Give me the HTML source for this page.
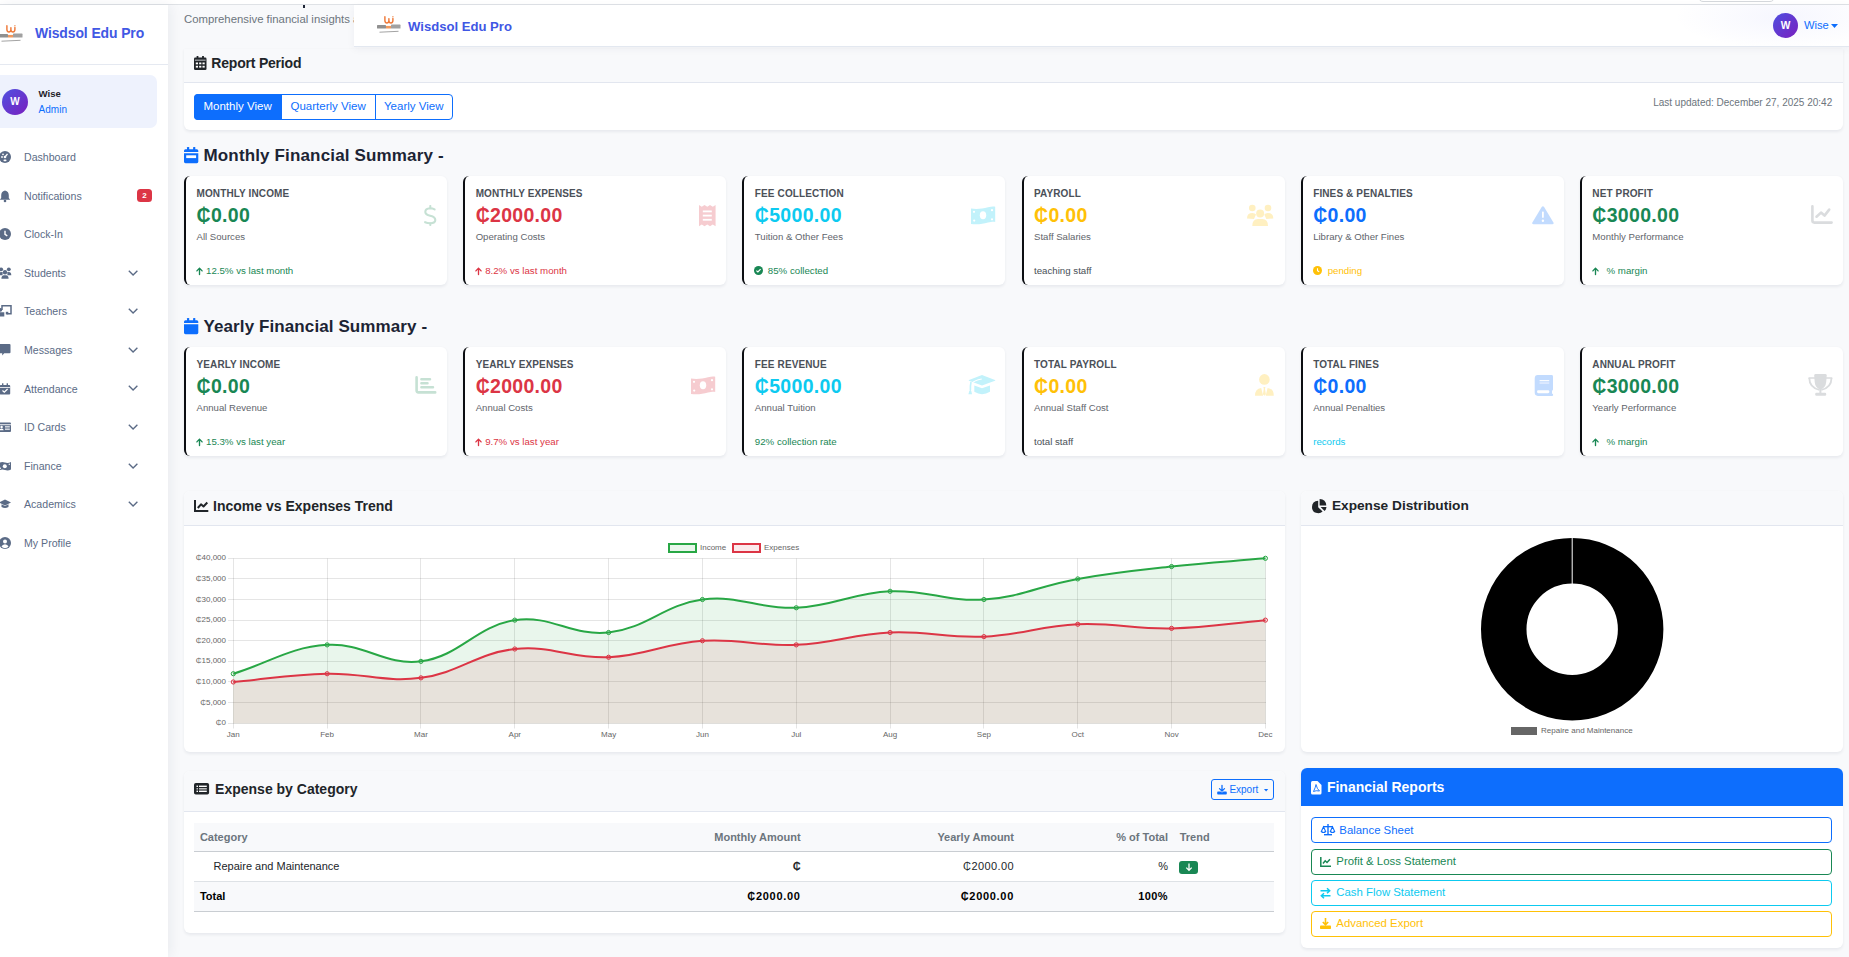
<!DOCTYPE html>
<html><head><meta charset="utf-8"><style>
html,body{margin:0;padding:0;width:1849px;height:957px;overflow:hidden;background:#fff;font-family:"Liberation Sans",sans-serif;}
.t{position:absolute;white-space:nowrap;}
svg{overflow:visible;}
</style></head><body>
<div style="position:absolute;left:0.00px;top:0.00px;width:1849.00px;height:4.00px;background:#fff;"></div>
<div style="position:absolute;left:1698.00px;top:-10.00px;width:77.00px;height:11.50px;background:#fff;border:1px solid #d5d8dc;border-radius:5px;box-sizing:border-box;"></div>
<div style="position:absolute;left:0.00px;top:4.00px;width:1849.00px;height:1.00px;background:#dfe2e6;"></div>
<div style="position:absolute;left:168.00px;top:5.00px;width:1681.00px;height:952.00px;background:#f8f9fb;"></div>
<div style="position:absolute;left:0.00px;top:5.00px;width:168.00px;height:952.00px;background:#fff;box-shadow:2px 0 12px rgba(30,40,70,0.07);z-index:2;"></div>
<svg style="position:absolute;left:-1.00px;top:24.10px;z-index:7;" width="24.00" height="19.00" viewBox="0 0 24 19"><path d="M7.9 1.8 L7.9 5.6 Q7.9 8 9.9 8 Q11.9 8 11.9 5.6 L11.9 3.6 M11.9 5.6 Q11.9 8 13.9 8 Q15.9 8 15.9 5.6 L15.9 3.4" fill="none" stroke="#ef7a3a" stroke-width="1.45" stroke-linecap="round"/><circle cx="15.9" cy="1.7" r="0.8" fill="#f19a66"/><rect x="0" y="10.1" width="9" height="3.4" rx="0.6" fill="#7c7c7c" opacity="0.85"/><rect x="9" y="10.9" width="5" height="2.6" fill="#f0995f"/><rect x="14" y="9.6" width="9.5" height="3.9" rx="0.6" fill="#8a8a8a" opacity="0.8"/><path d="M2.5 17.2 L21.5 16.3" stroke="#999" stroke-width="0.9"/></svg>
<div class="t" style="left:35.00px;top:27.19px;font-size:13.95px;line-height:13.95px;font-weight:bold;color:#4158e4;letter-spacing:-0.1px;z-index:3;">Wisdsol Edu Pro</div>
<div style="position:absolute;left:0.00px;top:64.00px;width:168.00px;height:1.00px;background:#e5e9f1;z-index:3;"></div>
<div style="position:absolute;left:-8.00px;top:75.00px;width:165.00px;height:53.00px;background:#eef2fd;border-radius:7px;z-index:3;"></div>
<div style="position:absolute;left:2.00px;top:89.00px;width:26.00px;height:26.00px;background:linear-gradient(135deg,#4f52e0,#7a1fbf);border-radius:50%;z-index:3;"></div>
<div class="t" style="left:15.00px;top:97.03px;font-size:10px;line-height:10px;font-weight:bold;color:#fff;width:0;display:flex;justify-content:center;z-index:4;">W</div>
<div class="t" style="left:38.60px;top:89.07px;font-size:9.6px;line-height:9.6px;font-weight:bold;color:#1f2229;z-index:3;">Wise</div>
<div class="t" style="left:38.60px;top:104.53px;font-size:10px;line-height:10px;color:#0d6efd;z-index:3;">Admin</div>
<svg style="position:absolute;left:-1.00px;top:151.00px;z-index:3;" width="12.00" height="12.00" viewBox="0 0 12 12"><circle cx="6" cy="6" r="6" fill="#5b6b86"/><circle cx="6" cy="6" r="1.3" fill="#fff"/><path d="M6 6 L8.5 2.8" stroke="#fff" stroke-width="1.3"/><circle cx="3" cy="6" r="0.9" fill="#fff"/><circle cx="4" cy="3.3" r="0.9" fill="#fff"/><circle cx="6.5" cy="2.2" r="0.0" fill="#fff"/><rect x="4.5" y="8.6" width="3" height="1.6" rx="0.8" fill="#fff"/></svg>
<div class="t" style="left:24.00px;top:151.93px;font-size:10.6px;line-height:10.6px;color:#5b6b86;z-index:3;">Dashboard</div>
<svg style="position:absolute;left:-1.00px;top:189.60px;z-index:3;" width="12.00" height="12.00" viewBox="0 0 12 12"><path d="M6 0.5 C3.2 1 2.2 3.2 2.2 5.5 L2.2 8 L0.8 9.8 L11.2 9.8 L9.8 8 L9.8 5.5 C9.8 3.2 8.8 1 6 0.5Z" fill="#5b6b86"/><circle cx="6" cy="11" r="1.3" fill="#5b6b86"/></svg>
<div class="t" style="left:24.00px;top:190.53px;font-size:10.6px;line-height:10.6px;color:#5b6b86;z-index:3;">Notifications</div>
<div style="position:absolute;left:137.00px;top:189.10px;width:15.00px;height:13.00px;background:#dc3545;border-radius:3.5px;z-index:3;"></div>
<div class="t" style="left:144.50px;top:191.83px;font-size:8px;line-height:8px;color:#fff;font-weight:bold;width:0;display:flex;justify-content:center;z-index:4;">2</div>
<svg style="position:absolute;left:-1.00px;top:228.20px;z-index:3;" width="12.00" height="12.00" viewBox="0 0 12 12"><circle cx="6" cy="6" r="6" fill="#5b6b86"/><path d="M6 2.8 L6 6.3 L8.3 7.8" stroke="#fff" stroke-width="1.4" fill="none"/></svg>
<div class="t" style="left:24.00px;top:229.13px;font-size:10.6px;line-height:10.6px;color:#5b6b86;z-index:3;">Clock-In</div>
<svg style="position:absolute;left:-1.00px;top:266.80px;z-index:3;" width="12.00" height="12.00" viewBox="0 0 12 12"><circle cx="2.2" cy="2.3" r="1.9" fill="#5b6b86"/><circle cx="9.8" cy="2.3" r="1.9" fill="#5b6b86"/><circle cx="6" cy="5.2" r="2.2" fill="#5b6b86"/><path d="M-0.3 8.3 Q-0.3 5 2.3 5 Q3.5 5 4 5.6 Q3.4 6.6 3.6 8.3Z M12.3 8.3 Q12.3 5 9.7 5 Q8.5 5 8 5.6 Q8.6 6.6 8.4 8.3Z" fill="#5b6b86"/><path d="M2.4 11.8 Q2.4 8.2 5 8.2 L7 8.2 Q9.6 8.2 9.6 11.8Z" fill="#5b6b86"/></svg>
<div class="t" style="left:24.00px;top:267.73px;font-size:10.6px;line-height:10.6px;color:#5b6b86;z-index:3;">Students</div>
<svg style="position:absolute;left:127.80px;top:269.60px;z-index:3;" width="10.20" height="6.50" viewBox="0 0 10.2 6.5"><path d="M0.8 0.8 L5.1 5.1 L9.4 0.8" fill="none" stroke="#5b6b86" stroke-width="1.35"/></svg>
<svg style="position:absolute;left:-1.00px;top:305.40px;z-index:3;" width="12.00" height="12.00" viewBox="0 0 12 12"><path d="M3 5 L3 0.8 L12 0.8 L12 8.7 L7.5 8.7" fill="none" stroke="#5b6b86" stroke-width="1.5"/><rect x="6.8" y="6.8" width="2.5" height="2.5" fill="#5b6b86"/><circle cx="1.3" cy="4.8" r="1.9" fill="#5b6b86"/><path d="M-1.5 11.5 Q-1.5 7.2 1.5 7.2 L5.3 7.2 L5.3 11.5Z" fill="#5b6b86"/></svg>
<div class="t" style="left:24.00px;top:306.33px;font-size:10.6px;line-height:10.6px;color:#5b6b86;z-index:3;">Teachers</div>
<svg style="position:absolute;left:127.80px;top:308.20px;z-index:3;" width="10.20" height="6.50" viewBox="0 0 10.2 6.5"><path d="M0.8 0.8 L5.1 5.1 L9.4 0.8" fill="none" stroke="#5b6b86" stroke-width="1.35"/></svg>
<svg style="position:absolute;left:-1.00px;top:344.00px;z-index:3;" width="12.00" height="12.00" viewBox="0 0 12 12"><path d="M-0.5 0 L10.5 0 Q11.5 0 11.5 1 L11.5 8.3 Q11.5 9.3 10.5 9.3 L5.2 9.3 L3.2 11.5 L3.2 9.3 L-0.5 9.3Z" fill="#5b6b86"/></svg>
<div class="t" style="left:24.00px;top:344.93px;font-size:10.6px;line-height:10.6px;color:#5b6b86;z-index:3;">Messages</div>
<svg style="position:absolute;left:127.80px;top:346.80px;z-index:3;" width="10.20" height="6.50" viewBox="0 0 10.2 6.5"><path d="M0.8 0.8 L5.1 5.1 L9.4 0.8" fill="none" stroke="#5b6b86" stroke-width="1.35"/></svg>
<svg style="position:absolute;left:-1.00px;top:382.60px;z-index:3;" width="12.00" height="12.00" viewBox="0 0 12 12"><rect x="0.8" y="2" width="10.4" height="9.5" rx="1" fill="#5b6b86"/><rect x="3" y="0.3" width="1.4" height="2.5" fill="#5b6b86"/><rect x="7.6" y="0.3" width="1.4" height="2.5" fill="#5b6b86"/><rect x="0.8" y="4" width="10.4" height="0.8" fill="#fff"/><path d="M3.5 7.5 L5.3 9.2 L8.6 6" stroke="#fff" stroke-width="1.2" fill="none"/></svg>
<div class="t" style="left:24.00px;top:383.53px;font-size:10.6px;line-height:10.6px;color:#5b6b86;z-index:3;">Attendance</div>
<svg style="position:absolute;left:127.80px;top:385.40px;z-index:3;" width="10.20" height="6.50" viewBox="0 0 10.2 6.5"><path d="M0.8 0.8 L5.1 5.1 L9.4 0.8" fill="none" stroke="#5b6b86" stroke-width="1.35"/></svg>
<svg style="position:absolute;left:-1.00px;top:421.20px;z-index:3;" width="12.00" height="12.00" viewBox="0 0 12 12"><rect x="-0.5" y="1.5" width="12.5" height="9.5" rx="1" fill="#5b6b86"/><rect x="-0.5" y="3.3" width="12.5" height="0.9" fill="#fff"/><circle cx="2.6" cy="6" r="1.2" fill="#fff"/><path d="M0.6 9.3 Q0.6 7.5 2.6 7.5 Q4.6 7.5 4.6 9.3Z" fill="#fff"/><rect x="6" y="5.3" width="4.8" height="1.1" fill="#fff"/><rect x="6" y="7.6" width="4.8" height="1.1" fill="#fff"/></svg>
<div class="t" style="left:24.00px;top:422.13px;font-size:10.6px;line-height:10.6px;color:#5b6b86;z-index:3;">ID Cards</div>
<svg style="position:absolute;left:127.80px;top:424.00px;z-index:3;" width="10.20" height="6.50" viewBox="0 0 10.2 6.5"><path d="M0.8 0.8 L5.1 5.1 L9.4 0.8" fill="none" stroke="#5b6b86" stroke-width="1.35"/></svg>
<svg style="position:absolute;left:-1.00px;top:459.80px;z-index:3;" width="12.00" height="12.00" viewBox="0 0 12 12"><path d="M-0.5 3 Q2.5 1.5 6 2.5 Q9 3.5 12 2 L12 9.5 Q9 11 6 10 Q2.5 9 -0.5 10.5Z" fill="#5b6b86"/><circle cx="5.8" cy="6.2" r="2" fill="#fff"/><circle cx="1.3" cy="8.2" r="0.7" fill="#fff"/><circle cx="10.3" cy="4.3" r="0.7" fill="#fff"/></svg>
<div class="t" style="left:24.00px;top:460.73px;font-size:10.6px;line-height:10.6px;color:#5b6b86;z-index:3;">Finance</div>
<svg style="position:absolute;left:127.80px;top:462.60px;z-index:3;" width="10.20" height="6.50" viewBox="0 0 10.2 6.5"><path d="M0.8 0.8 L5.1 5.1 L9.4 0.8" fill="none" stroke="#5b6b86" stroke-width="1.35"/></svg>
<svg style="position:absolute;left:-1.00px;top:498.40px;z-index:3;" width="12.00" height="12.00" viewBox="0 0 12 12"><path d="M6 1.5 L12 4.5 L6 7.5 L0 4.5Z" fill="#5b6b86"/><path d="M2.5 6.2 L2.5 9 Q6 11 9.5 9 L9.5 6.2 L6 8Z" fill="#5b6b86"/></svg>
<div class="t" style="left:24.00px;top:499.33px;font-size:10.6px;line-height:10.6px;color:#5b6b86;z-index:3;">Academics</div>
<svg style="position:absolute;left:127.80px;top:501.20px;z-index:3;" width="10.20" height="6.50" viewBox="0 0 10.2 6.5"><path d="M0.8 0.8 L5.1 5.1 L9.4 0.8" fill="none" stroke="#5b6b86" stroke-width="1.35"/></svg>
<svg style="position:absolute;left:-1.00px;top:537.00px;z-index:3;" width="12.00" height="12.00" viewBox="0 0 12 12"><circle cx="6" cy="6" r="6" fill="#5b6b86"/><circle cx="6" cy="4.5" r="2" fill="#fff"/><path d="M2.5 9.8 Q3.2 7.2 6 7.2 Q8.8 7.2 9.5 9.8 Q6 12.5 2.5 9.8Z" fill="#fff"/></svg>
<div class="t" style="left:24.00px;top:537.93px;font-size:10.6px;line-height:10.6px;color:#5b6b86;z-index:3;">My Profile</div>
<div class="t" style="left:184.00px;top:13.79px;font-size:11.35px;line-height:11.35px;color:#6c757d;">Comprehensive financial insights and analytics</div>
<div style="position:absolute;left:303.00px;top:5.00px;width:2.40px;height:2.80px;background:#1e2535;"></div>
<div style="position:absolute;left:184.00px;top:49.00px;width:1659.00px;height:81.00px;background:#fff;border-radius:0 0 6px 6px;box-shadow:0 1.5px 3px rgba(30,40,70,0.07);"></div>
<div style="position:absolute;left:184.00px;top:49.00px;width:1659.00px;height:34.00px;background:#f8f9fb;border-bottom:1px solid #e2e6ef;box-sizing:border-box;"></div>
<svg style="position:absolute;left:194.00px;top:56.00px;" width="12.50" height="14.00" viewBox="0 0 12.5 14"><rect x="2.6" y="0" width="1.8" height="2.5" fill="#212529"/><rect x="8.1" y="0" width="1.8" height="2.5" fill="#212529"/><rect x="0" y="1.6" width="12.5" height="12.4" rx="1.3" fill="#212529"/><rect x="0.9" y="3.5" width="10.7" height="1.5" fill="#8a8d91"/><rect x="1.8" y="6.5" width="2.2" height="1.8" fill="#fff"/><rect x="5.15" y="6.5" width="2.2" height="1.8" fill="#fff"/><rect x="8.5" y="6.5" width="2.2" height="1.8" fill="#fff"/><rect x="1.8" y="9.8" width="2.2" height="1.8" fill="#fff"/><rect x="5.15" y="9.8" width="2.2" height="1.8" fill="#fff"/><rect x="8.5" y="9.8" width="2.2" height="1.8" fill="#fff"/></svg>
<div class="t" style="left:211.30px;top:55.85px;font-size:14px;line-height:14px;font-weight:bold;color:#212529;letter-spacing:-0.2px;">Report Period</div>
<div style="position:absolute;left:194.00px;top:94.00px;width:259.00px;height:26.00px;border:1px solid #0d6efd;border-radius:4px;box-sizing:border-box;background:#fff;"></div>
<div style="position:absolute;left:194.00px;top:94.00px;width:88.00px;height:26.00px;background:#0d6efd;border-radius:4px 0 0 4px;"></div>
<div style="position:absolute;left:374.50px;top:94.00px;width:1.00px;height:26.00px;background:#0d6efd;"></div>
<div class="t" style="left:203.50px;top:101.17px;font-size:11.5px;line-height:11.5px;color:#fff;">Monthly View</div>
<div class="t" style="left:290.50px;top:101.17px;font-size:11.5px;line-height:11.5px;color:#0d6efd;">Quarterly View</div>
<div class="t" style="left:384.00px;top:101.17px;font-size:11.5px;line-height:11.5px;color:#0d6efd;">Yearly View</div>
<div class="t" style="right:16.80px;text-align:right;top:98.23px;font-size:10px;line-height:10px;color:#6c757d;">Last updated: December 27, 2025 20:42</div>
<div style="position:absolute;left:354.00px;top:5.00px;width:1495.00px;height:42.00px;background:radial-gradient(ellipse 110px 32px at 1430px 12px, rgba(99,110,241,0.06), rgba(99,110,241,0) 100%),#fff;border-bottom:1px solid #e3e8f0;box-shadow:0 2px 8px rgba(30,40,70,0.05);z-index:5;box-sizing:border-box;"></div>
<svg style="position:absolute;left:377.00px;top:15.30px;z-index:7;" width="24.00" height="19.00" viewBox="0 0 24 19"><path d="M7.9 1.8 L7.9 5.6 Q7.9 8 9.9 8 Q11.9 8 11.9 5.6 L11.9 3.6 M11.9 5.6 Q11.9 8 13.9 8 Q15.9 8 15.9 5.6 L15.9 3.4" fill="none" stroke="#ef7a3a" stroke-width="1.45" stroke-linecap="round"/><circle cx="15.9" cy="1.7" r="0.8" fill="#f19a66"/><rect x="0" y="10.1" width="9" height="3.4" rx="0.6" fill="#7c7c7c" opacity="0.85"/><rect x="9" y="10.9" width="5" height="2.6" fill="#f0995f"/><rect x="14" y="9.6" width="9.5" height="3.9" rx="0.6" fill="#8a8a8a" opacity="0.8"/><path d="M2.5 17.2 L21.5 16.3" stroke="#999" stroke-width="0.9"/></svg>
<style>svg{z-index:1}</style>
<div class="t" style="left:408.00px;top:20.41px;font-size:13.1px;line-height:13.1px;font-weight:bold;color:#3f57e4;z-index:6;">Wisdsol Edu Pro</div>
<div style="position:absolute;left:1773.00px;top:13.00px;width:25.00px;height:25.00px;background:linear-gradient(135deg,#4e4fe0,#7a1fbf);border-radius:50%;z-index:6;"></div>
<div class="t" style="left:1785.50px;top:20.67px;font-size:10.2px;line-height:10.2px;font-weight:bold;color:#fff;width:0;display:flex;justify-content:center;z-index:7;">W</div>
<div class="t" style="left:1803.90px;top:20.02px;font-size:11.2px;line-height:11.2px;color:#0d6efd;z-index:6;">Wise</div>
<svg style="position:absolute;left:1831.00px;top:23.50px;z-index:6;" width="7.00" height="4.00" viewBox="0 0 7 4"><path d="M0 0 L7 0 L3.5 4Z" fill="#0d6efd"/></svg>
<svg style="position:absolute;left:183.80px;top:146.80px;" width="14.30" height="16.30" viewBox="0 0 14.3 16.3"><rect x="3" y="0" width="2.2" height="3" rx="0.6" fill="#0d6efd"/><rect x="9.1" y="0" width="2.2" height="3" rx="0.6" fill="#0d6efd"/><path d="M1.5 2.3 L12.8 2.3 Q14.3 2.3 14.3 3.8 L14.3 5.1 L0 5.1 L0 3.8 Q0 2.3 1.5 2.3Z" fill="#0d6efd"/><path d="M0 6.2 L14.3 6.2 L14.3 14.8 Q14.3 16.3 12.8 16.3 L1.5 16.3 Q0 16.3 0 14.8Z" fill="#0d6efd"/><rect x="2.2" y="8.3" width="9.9" height="2.8" fill="#fff"/></svg>
<div class="t" style="left:203.50px;top:146.81px;font-size:17px;line-height:17px;font-weight:bold;color:#1c2434;letter-spacing:0.15px;">Monthly Financial Summary -</div>
<svg style="position:absolute;left:183.80px;top:317.80px;" width="14.30" height="16.30" viewBox="0 0 14.3 16.3"><rect x="3" y="0" width="2.2" height="3" rx="0.6" fill="#0d6efd"/><rect x="9.1" y="0" width="2.2" height="3" rx="0.6" fill="#0d6efd"/><path d="M1.5 2.3 L12.8 2.3 Q14.3 2.3 14.3 3.8 L14.3 5.1 L0 5.1 L0 3.8 Q0 2.3 1.5 2.3Z" fill="#0d6efd"/><path d="M0 6.2 L14.3 6.2 L14.3 14.8 Q14.3 16.3 12.8 16.3 L1.5 16.3 Q0 16.3 0 14.8Z" fill="#0d6efd"/></svg>
<div class="t" style="left:203.50px;top:318.21px;font-size:17px;line-height:17px;font-weight:bold;color:#1c2434;letter-spacing:0.1px;">Yearly Financial Summary -</div>
<div style="position:absolute;left:184.00px;top:176.00px;width:263.17px;height:109.00px;background:#fff;border-radius:6px;border-left:2px solid #0c0e12;box-sizing:border-box;box-shadow:0 1.5px 3px rgba(30,40,70,0.07);"></div>
<div class="t" style="left:196.50px;top:188.53px;font-size:10px;line-height:10px;font-weight:bold;color:#4b5058;letter-spacing:0.12px;">MONTHLY INCOME</div>
<div class="t" style="left:196.50px;top:205.79px;font-size:19.5px;line-height:19.5px;font-weight:bold;color:#198754;letter-spacing:0.3px;">₵0.00</div>
<div class="t" style="left:196.50px;top:231.87px;font-size:9.6px;line-height:9.6px;color:#5f656c;">All Sources</div>
<svg style="position:absolute;left:196.20px;top:266.60px;" width="7.00" height="8.20" viewBox="0 0 7 8.2"><path d="M3.5 7.6 L3.5 1.3 M0.9 3.9 L3.5 1.1 L6.1 3.9" fill="none" stroke="#198754" stroke-width="1.35" stroke-linecap="round" stroke-linejoin="round"/></svg>
<div class="t" style="left:206.00px;top:265.99px;font-size:9.7px;line-height:9.7px;color:#198754;">12.5% vs last month</div>
<svg style="position:absolute;left:423.80px;top:205.00px;" width="12.50" height="21.00" viewBox="0 0 12.5 21"><path d="M10.6 4.4 Q8.5 3.3 6.2 3.3 Q1.3 3.5 1.3 6.9 Q1.3 9.5 6.2 10.7 Q11.3 11.9 11.3 15 Q11.3 18.2 6.3 18.2 Q3.3 18.2 1.1 17.2" fill="none" stroke="#c6e1d4" stroke-width="2.1" stroke-linecap="round"/><rect x="5.3" y="0" width="2" height="3.6" rx="0.8" fill="#c6e1d4"/><rect x="5.3" y="17.6" width="2" height="3.5" rx="0.8" fill="#c6e1d4"/></svg>
<div style="position:absolute;left:463.17px;top:176.00px;width:263.17px;height:109.00px;background:#fff;border-radius:6px;border-left:2px solid #0c0e12;box-sizing:border-box;box-shadow:0 1.5px 3px rgba(30,40,70,0.07);"></div>
<div class="t" style="left:475.67px;top:188.53px;font-size:10px;line-height:10px;font-weight:bold;color:#4b5058;letter-spacing:0.12px;">MONTHLY EXPENSES</div>
<div class="t" style="left:475.67px;top:205.79px;font-size:19.5px;line-height:19.5px;font-weight:bold;color:#dc3545;letter-spacing:0.3px;">₵2000.00</div>
<div class="t" style="left:475.67px;top:231.87px;font-size:9.6px;line-height:9.6px;color:#5f656c;">Operating Costs</div>
<svg style="position:absolute;left:475.37px;top:266.60px;" width="7.00" height="8.20" viewBox="0 0 7 8.2"><path d="M3.5 7.6 L3.5 1.3 M0.9 3.9 L3.5 1.1 L6.1 3.9" fill="none" stroke="#dc3545" stroke-width="1.35" stroke-linecap="round" stroke-linejoin="round"/></svg>
<div class="t" style="left:485.17px;top:265.99px;font-size:9.7px;line-height:9.7px;color:#dc3545;">8.2% vs last month</div>
<svg style="position:absolute;left:698.80px;top:204.50px;" width="16.60" height="21.20" viewBox="0 0 16.6 21.2"><path d="M0 0 L2.8 1.8 L5.5 0 L8.3 1.8 L11 0 L13.8 1.8 L16.6 0 L16.6 21.2 L13.8 19.4 L11 21.2 L8.3 19.4 L5.5 21.2 L2.8 19.4 L0 21.2Z" fill="#f6ccd0"/><rect x="3.8" y="5.5" width="9" height="1.8" fill="#fff"/><rect x="3.8" y="9.7" width="9" height="1.8" fill="#fff"/><rect x="3.8" y="13.9" width="9" height="1.8" fill="#fff"/></svg>
<div style="position:absolute;left:742.33px;top:176.00px;width:263.17px;height:109.00px;background:#fff;border-radius:6px;border-left:2px solid #0c0e12;box-sizing:border-box;box-shadow:0 1.5px 3px rgba(30,40,70,0.07);"></div>
<div class="t" style="left:754.83px;top:188.53px;font-size:10px;line-height:10px;font-weight:bold;color:#4b5058;letter-spacing:0.12px;">FEE COLLECTION</div>
<div class="t" style="left:754.83px;top:205.79px;font-size:19.5px;line-height:19.5px;font-weight:bold;color:#0dcaf0;letter-spacing:0.3px;">₵5000.00</div>
<div class="t" style="left:754.83px;top:231.87px;font-size:9.6px;line-height:9.6px;color:#5f656c;">Tuition &amp; Other Fees</div>
<svg style="position:absolute;left:754.33px;top:266.40px;" width="9.00" height="9.00" viewBox="0 0 9 9"><circle cx="4.5" cy="4.5" r="4.5" fill="#198754"/><path d="M2.4 4.6 L3.9 6 L6.6 3.2" fill="none" stroke="#fff" stroke-width="1.2"/></svg>
<div class="t" style="left:767.83px;top:265.99px;font-size:9.7px;line-height:9.7px;color:#198754;">85% collected</div>
<svg style="position:absolute;left:970.80px;top:205.70px;" width="24.50" height="19.00" viewBox="0 0 24.5 19"><path d="M0 2.4 C5 3.4 11 2.8 17 1.2 C20.5 0.3 23 0.2 24.2 0.8 L24.2 16 C23 15.6 20.5 15.6 17 16.6 C11 18.4 5 18.8 0 17.9Z" fill="#c2f2fb"/><ellipse cx="12" cy="9.3" rx="3.2" ry="4" fill="#fff"/><circle cx="3" cy="5.8" r="1.1" fill="#fff"/><circle cx="3.2" cy="14.6" r="1.1" fill="#fff"/><circle cx="21" cy="4.2" r="1.1" fill="#fff"/><circle cx="21" cy="13.3" r="1.1" fill="#fff"/></svg>
<div style="position:absolute;left:1021.50px;top:176.00px;width:263.17px;height:109.00px;background:#fff;border-radius:6px;border-left:2px solid #0c0e12;box-sizing:border-box;box-shadow:0 1.5px 3px rgba(30,40,70,0.07);"></div>
<div class="t" style="left:1034.00px;top:188.53px;font-size:10px;line-height:10px;font-weight:bold;color:#4b5058;letter-spacing:0.12px;">PAYROLL</div>
<div class="t" style="left:1034.00px;top:205.79px;font-size:19.5px;line-height:19.5px;font-weight:bold;color:#ffc107;letter-spacing:0.3px;">₵0.00</div>
<div class="t" style="left:1034.00px;top:231.87px;font-size:9.6px;line-height:9.6px;color:#5f656c;">Staff Salaries</div>
<div class="t" style="left:1034.00px;top:265.99px;font-size:9.7px;line-height:9.7px;color:#495057;">teaching staff</div>
<svg style="position:absolute;left:1247.30px;top:204.20px;" width="26.30" height="22.00" viewBox="0 0 26.3 22"><circle cx="5.3" cy="4" r="3.3" fill="#fff0c1"/><circle cx="21" cy="4" r="3.3" fill="#fff0c1"/><circle cx="13.15" cy="9.6" r="4" fill="#fff0c1"/><path d="M0 14.5 Q0 9 5.5 9 Q8 9 9 10.5 L7 15Z M26.3 14.5 Q26.3 9 20.8 9 Q18.3 9 17.3 10.5 L19.3 15Z" fill="#fff0c1"/><path d="M5.3 22 Q5.3 15 11 15 L15.3 15 Q21 15 21 22Z" fill="#fff0c1"/></svg>
<div style="position:absolute;left:1300.67px;top:176.00px;width:263.17px;height:109.00px;background:#fff;border-radius:6px;border-left:2px solid #0c0e12;box-sizing:border-box;box-shadow:0 1.5px 3px rgba(30,40,70,0.07);"></div>
<div class="t" style="left:1313.17px;top:188.53px;font-size:10px;line-height:10px;font-weight:bold;color:#4b5058;letter-spacing:0.12px;">FINES &amp; PENALTIES</div>
<div class="t" style="left:1313.17px;top:205.79px;font-size:19.5px;line-height:19.5px;font-weight:bold;color:#0d6efd;letter-spacing:0.3px;">₵0.00</div>
<div class="t" style="left:1313.17px;top:231.87px;font-size:9.6px;line-height:9.6px;color:#5f656c;">Library &amp; Other Fines</div>
<svg style="position:absolute;left:1312.67px;top:266.40px;" width="9.00" height="9.00" viewBox="0 0 9 9"><circle cx="4.5" cy="4.5" r="4.5" fill="#ffc107"/><path d="M4.5 2.2 L4.5 4.8 L6.2 5.8" fill="none" stroke="#fff" stroke-width="1.1"/></svg>
<div class="t" style="left:1327.67px;top:265.99px;font-size:9.7px;line-height:9.7px;color:#ffc107;">pending</div>
<svg style="position:absolute;left:1531.80px;top:205.70px;" width="22.00" height="19.00" viewBox="0 0 22 19"><path d="M9.7 1.1 Q10.9 -0.6 12.1 1.1 L21.4 16.6 Q22.3 18.2 20.5 18.2 L1.3 18.2 Q-0.5 18.2 0.4 16.6Z" fill="#c2dbfe"/><rect x="10" y="5.4" width="1.8" height="6.4" rx="0.6" fill="#fff"/><circle cx="10.9" cy="14.8" r="1.2" fill="#fff"/></svg>
<div style="position:absolute;left:1579.83px;top:176.00px;width:263.17px;height:109.00px;background:#fff;border-radius:6px;border-left:2px solid #0c0e12;box-sizing:border-box;box-shadow:0 1.5px 3px rgba(30,40,70,0.07);"></div>
<div class="t" style="left:1592.33px;top:188.53px;font-size:10px;line-height:10px;font-weight:bold;color:#4b5058;letter-spacing:0.12px;">NET PROFIT</div>
<div class="t" style="left:1592.33px;top:205.79px;font-size:19.5px;line-height:19.5px;font-weight:bold;color:#198754;letter-spacing:0.3px;">₵3000.00</div>
<div class="t" style="left:1592.33px;top:231.87px;font-size:9.6px;line-height:9.6px;color:#5f656c;">Monthly Performance</div>
<svg style="position:absolute;left:1592.03px;top:266.60px;" width="7.00" height="8.20" viewBox="0 0 7 8.2"><path d="M3.5 7.6 L3.5 1.3 M0.9 3.9 L3.5 1.1 L6.1 3.9" fill="none" stroke="#198754" stroke-width="1.35" stroke-linecap="round" stroke-linejoin="round"/></svg>
<div class="t" style="left:1606.53px;top:265.99px;font-size:9.7px;line-height:9.7px;color:#198754;">% margin</div>
<svg style="position:absolute;left:1810.60px;top:205.40px;" width="22.00" height="19.00" viewBox="0 0 22 19"><path d="M1.4 1.2 L1.4 15.6 Q1.4 17.6 3.4 17.6 L20.6 17.6" fill="none" stroke="#dadcde" stroke-width="2.6" stroke-linecap="round"/><path d="M5.5 11.7 L10 7.6 L13.5 10.6 L18.2 4.6" fill="none" stroke="#dadcde" stroke-width="2.6" stroke-linecap="round" stroke-linejoin="round"/></svg>
<div style="position:absolute;left:184.00px;top:347.00px;width:263.17px;height:109.00px;background:#fff;border-radius:6px;border-left:2px solid #0c0e12;box-sizing:border-box;box-shadow:0 1.5px 3px rgba(30,40,70,0.07);"></div>
<div class="t" style="left:196.50px;top:359.54px;font-size:10px;line-height:10px;font-weight:bold;color:#4b5058;letter-spacing:0.12px;">YEARLY INCOME</div>
<div class="t" style="left:196.50px;top:376.79px;font-size:19.5px;line-height:19.5px;font-weight:bold;color:#198754;letter-spacing:0.3px;">₵0.00</div>
<div class="t" style="left:196.50px;top:402.87px;font-size:9.6px;line-height:9.6px;color:#5f656c;">Annual Revenue</div>
<svg style="position:absolute;left:196.20px;top:437.60px;" width="7.00" height="8.20" viewBox="0 0 7 8.2"><path d="M3.5 7.6 L3.5 1.3 M0.9 3.9 L3.5 1.1 L6.1 3.9" fill="none" stroke="#198754" stroke-width="1.35" stroke-linecap="round" stroke-linejoin="round"/></svg>
<div class="t" style="left:206.00px;top:436.99px;font-size:9.7px;line-height:9.7px;color:#198754;">15.3% vs last year</div>
<svg style="position:absolute;left:414.90px;top:376.20px;" width="21.40" height="18.00" viewBox="0 0 21.4 18"><path d="M1.6 1.4 L1.6 14.6 Q1.6 16.4 3.4 16.4 L20.2 16.4" fill="none" stroke="#c6e1d4" stroke-width="2.6" stroke-linecap="round"/><path d="M6.4 3.3 L15 3.3 M6.4 7.3 L12.5 7.3 M6.4 11.3 L18 11.3" fill="none" stroke="#c6e1d4" stroke-width="2.5" stroke-linecap="round"/></svg>
<div style="position:absolute;left:463.17px;top:347.00px;width:263.17px;height:109.00px;background:#fff;border-radius:6px;border-left:2px solid #0c0e12;box-sizing:border-box;box-shadow:0 1.5px 3px rgba(30,40,70,0.07);"></div>
<div class="t" style="left:475.67px;top:359.54px;font-size:10px;line-height:10px;font-weight:bold;color:#4b5058;letter-spacing:0.12px;">YEARLY EXPENSES</div>
<div class="t" style="left:475.67px;top:376.79px;font-size:19.5px;line-height:19.5px;font-weight:bold;color:#dc3545;letter-spacing:0.3px;">₵2000.00</div>
<div class="t" style="left:475.67px;top:402.87px;font-size:9.6px;line-height:9.6px;color:#5f656c;">Annual Costs</div>
<svg style="position:absolute;left:475.37px;top:437.60px;" width="7.00" height="8.20" viewBox="0 0 7 8.2"><path d="M3.5 7.6 L3.5 1.3 M0.9 3.9 L3.5 1.1 L6.1 3.9" fill="none" stroke="#dc3545" stroke-width="1.35" stroke-linecap="round" stroke-linejoin="round"/></svg>
<div class="t" style="left:485.17px;top:436.99px;font-size:9.7px;line-height:9.7px;color:#dc3545;">9.7% vs last year</div>
<svg style="position:absolute;left:691.20px;top:375.70px;" width="24.50" height="19.00" viewBox="0 0 24.5 19"><path d="M0 2.4 C5 3.4 11 2.8 17 1.2 C20.5 0.3 23 0.2 24.2 0.8 L24.2 16 C23 15.6 20.5 15.6 17 16.6 C11 18.4 5 18.8 0 17.9Z" fill="#f6ccd0"/><ellipse cx="12" cy="9.3" rx="3.2" ry="4" fill="#fff"/><circle cx="3" cy="5.8" r="1.1" fill="#fff"/><circle cx="3.2" cy="14.6" r="1.1" fill="#fff"/><circle cx="21" cy="4.2" r="1.1" fill="#fff"/><circle cx="21" cy="13.3" r="1.1" fill="#fff"/></svg>
<div style="position:absolute;left:742.33px;top:347.00px;width:263.17px;height:109.00px;background:#fff;border-radius:6px;border-left:2px solid #0c0e12;box-sizing:border-box;box-shadow:0 1.5px 3px rgba(30,40,70,0.07);"></div>
<div class="t" style="left:754.83px;top:359.54px;font-size:10px;line-height:10px;font-weight:bold;color:#4b5058;letter-spacing:0.12px;">FEE REVENUE</div>
<div class="t" style="left:754.83px;top:376.79px;font-size:19.5px;line-height:19.5px;font-weight:bold;color:#0dcaf0;letter-spacing:0.3px;">₵5000.00</div>
<div class="t" style="left:754.83px;top:402.87px;font-size:9.6px;line-height:9.6px;color:#5f656c;">Annual Tuition</div>
<div class="t" style="left:754.83px;top:436.99px;font-size:9.7px;line-height:9.7px;color:#198754;">92% collection rate</div>
<svg style="position:absolute;left:967.70px;top:374.80px;" width="27.60" height="19.70" viewBox="0 0 27.6 19.7"><path d="M14 0 L27 5 Q27.8 5.4 27 5.8 L14 10.6 L1 5.8 Q0.2 5.4 1 5Z" fill="#c2f2fb"/><path d="M6.3 10.4 L14 13.2 L22 10.4 L22 16.8 Q14 21.6 6.3 16.8Z" fill="#c2f2fb"/><path d="M13.8 4 Q6 5.5 3.6 8.5 Q2.8 12 3 15" fill="none" stroke="#fff" stroke-width="1.2"/><path d="M3 7 Q2.2 11 2.4 15" fill="none" stroke="#c2f2fb" stroke-width="1.6"/><path d="M0.4 19.2 Q1 15.5 2.4 14.2 Q3.5 15.5 4 19.2Z" fill="#c2f2fb"/></svg>
<div style="position:absolute;left:1021.50px;top:347.00px;width:263.17px;height:109.00px;background:#fff;border-radius:6px;border-left:2px solid #0c0e12;box-sizing:border-box;box-shadow:0 1.5px 3px rgba(30,40,70,0.07);"></div>
<div class="t" style="left:1034.00px;top:359.54px;font-size:10px;line-height:10px;font-weight:bold;color:#4b5058;letter-spacing:0.12px;">TOTAL PAYROLL</div>
<div class="t" style="left:1034.00px;top:376.79px;font-size:19.5px;line-height:19.5px;font-weight:bold;color:#ffc107;letter-spacing:0.3px;">₵0.00</div>
<div class="t" style="left:1034.00px;top:402.87px;font-size:9.6px;line-height:9.6px;color:#5f656c;">Annual Staff Cost</div>
<div class="t" style="left:1034.00px;top:436.99px;font-size:9.7px;line-height:9.7px;color:#495057;">total staff</div>
<svg style="position:absolute;left:1254.80px;top:374.20px;" width="19.00" height="22.00" viewBox="0 0 19 22"><circle cx="9.4" cy="5.4" r="5.3" fill="#fff0c1"/><path d="M0 21.8 Q0 14.6 6.2 14 L8.1 21.8Z" fill="#fff0c1"/><path d="M18.8 21.8 Q18.8 14.6 12.6 14 L10.7 21.8Z" fill="#fff0c1"/><path d="M8.4 13.1 L10.4 13.1 L10 14.9 L10.9 20.2 L9.4 21.8 L7.9 20.2 L8.8 14.9Z" fill="#fff0c1"/></svg>
<div style="position:absolute;left:1300.67px;top:347.00px;width:263.17px;height:109.00px;background:#fff;border-radius:6px;border-left:2px solid #0c0e12;box-sizing:border-box;box-shadow:0 1.5px 3px rgba(30,40,70,0.07);"></div>
<div class="t" style="left:1313.17px;top:359.54px;font-size:10px;line-height:10px;font-weight:bold;color:#4b5058;letter-spacing:0.12px;">TOTAL FINES</div>
<div class="t" style="left:1313.17px;top:376.79px;font-size:19.5px;line-height:19.5px;font-weight:bold;color:#0d6efd;letter-spacing:0.3px;">₵0.00</div>
<div class="t" style="left:1313.17px;top:402.87px;font-size:9.6px;line-height:9.6px;color:#5f656c;">Annual Penalties</div>
<div class="t" style="left:1313.17px;top:436.99px;font-size:9.7px;line-height:9.7px;color:#0dcaf0;">records</div>
<svg style="position:absolute;left:1534.30px;top:374.80px;" width="19.30" height="21.20" viewBox="0 0 19.3 21.2"><path d="M3.8 0 L17.6 0 Q19 0 19 1.5 L19 14.3 Q19 15.4 18 15.8 L18 18.6 Q19.2 19 19.2 20 Q19.2 20.9 18 20.9 L3.8 20.9 Q0.7 20.9 0.7 17.6 L0.7 3.5 Q0.7 0 3.8 0Z" fill="#c2dbfe"/><rect x="3" y="15.3" width="12.4" height="2.9" rx="1.4" fill="#fff"/><rect x="5.6" y="5.1" width="9.6" height="1.1" fill="#fff"/><rect x="5.6" y="7.5" width="9.6" height="1.1" fill="#eef4ff"/></svg>
<div style="position:absolute;left:1579.83px;top:347.00px;width:263.17px;height:109.00px;background:#fff;border-radius:6px;border-left:2px solid #0c0e12;box-sizing:border-box;box-shadow:0 1.5px 3px rgba(30,40,70,0.07);"></div>
<div class="t" style="left:1592.33px;top:359.54px;font-size:10px;line-height:10px;font-weight:bold;color:#4b5058;letter-spacing:0.12px;">ANNUAL PROFIT</div>
<div class="t" style="left:1592.33px;top:376.79px;font-size:19.5px;line-height:19.5px;font-weight:bold;color:#198754;letter-spacing:0.3px;">₵3000.00</div>
<div class="t" style="left:1592.33px;top:402.87px;font-size:9.6px;line-height:9.6px;color:#5f656c;">Yearly Performance</div>
<svg style="position:absolute;left:1592.03px;top:437.60px;" width="7.00" height="8.20" viewBox="0 0 7 8.2"><path d="M3.5 7.6 L3.5 1.3 M0.9 3.9 L3.5 1.1 L6.1 3.9" fill="none" stroke="#198754" stroke-width="1.35" stroke-linecap="round" stroke-linejoin="round"/></svg>
<div class="t" style="left:1606.53px;top:436.99px;font-size:9.7px;line-height:9.7px;color:#198754;">% margin</div>
<svg style="position:absolute;left:1807.80px;top:374.20px;" width="24.80" height="21.80" viewBox="0 0 24.8 21.8"><path d="M6.2 1.5 Q6.2 0 7.7 0 L17.2 0 Q18.7 0 18.7 1.5 L18.2 8 Q17.6 14 12.4 15.6 Q7.2 14 6.7 8Z" fill="#dadcde"/><rect x="0.4" y="3.2" width="24" height="1.6" rx="0.5" fill="#dadcde"/><path d="M1.3 4 Q1.3 13.5 11.5 16 M23.5 4 Q23.5 13.5 13.3 16" fill="none" stroke="#dadcde" stroke-width="1.8"/><rect x="11.4" y="15" width="2" height="4.5" fill="#dadcde"/><rect x="7.2" y="18.8" width="11" height="2.9" rx="1.2" fill="#dadcde"/></svg>
<div style="position:absolute;left:184.00px;top:491.00px;width:1101.00px;height:260.50px;background:#fff;border-radius:6px;box-shadow:0 1.5px 3px rgba(30,40,70,0.07);"></div>
<div style="position:absolute;left:184.00px;top:491.00px;width:1101.00px;height:35.00px;background:#f8f9fb;border-radius:6px 6px 0 0;border-bottom:1px solid #e2e6ef;box-sizing:border-box;"></div>
<svg style="position:absolute;left:193.60px;top:500.00px;" width="14.30" height="12.00" viewBox="0 0 14.3 12"><path d="M1 0 L1 11 L14.3 11" fill="none" stroke="#212529" stroke-width="2"/><path d="M3.8 8 L7 4.3 L9.5 6.5 L13.3 2.5" fill="none" stroke="#212529" stroke-width="2" stroke-linejoin="round"/></svg>
<div class="t" style="left:213.10px;top:499.05px;font-size:14px;line-height:14px;font-weight:bold;color:#212529;">Income vs Expenses Trend</div>
<svg style="position:absolute;left:0;top:0;" width="1849" height="957" viewBox="0 0 1849 957"><line x1="228" x2="1266.0" y1="723.5" y2="723.5" stroke="rgba(0,0,0,0.1)" stroke-width="1"/>
<line x1="228" x2="1266.0" y1="702.5" y2="702.5" stroke="rgba(0,0,0,0.1)" stroke-width="1"/>
<line x1="228" x2="1266.0" y1="681.5" y2="681.5" stroke="rgba(0,0,0,0.1)" stroke-width="1"/>
<line x1="228" x2="1266.0" y1="661.5" y2="661.5" stroke="rgba(0,0,0,0.1)" stroke-width="1"/>
<line x1="228" x2="1266.0" y1="640.5" y2="640.5" stroke="rgba(0,0,0,0.1)" stroke-width="1"/>
<line x1="228" x2="1266.0" y1="620.5" y2="620.5" stroke="rgba(0,0,0,0.1)" stroke-width="1"/>
<line x1="228" x2="1266.0" y1="599.5" y2="599.5" stroke="rgba(0,0,0,0.1)" stroke-width="1"/>
<line x1="228" x2="1266.0" y1="578.5" y2="578.5" stroke="rgba(0,0,0,0.1)" stroke-width="1"/>
<line x1="228" x2="1266.0" y1="558.5" y2="558.5" stroke="rgba(0,0,0,0.1)" stroke-width="1"/>
<line x1="233.5" x2="233.5" y1="558.5" y2="728.5" stroke="rgba(0,0,0,0.1)" stroke-width="1"/>
<line x1="327.5" x2="327.5" y1="558.5" y2="728.5" stroke="rgba(0,0,0,0.1)" stroke-width="1"/>
<line x1="420.5" x2="420.5" y1="558.5" y2="728.5" stroke="rgba(0,0,0,0.1)" stroke-width="1"/>
<line x1="514.5" x2="514.5" y1="558.5" y2="728.5" stroke="rgba(0,0,0,0.1)" stroke-width="1"/>
<line x1="608.5" x2="608.5" y1="558.5" y2="728.5" stroke="rgba(0,0,0,0.1)" stroke-width="1"/>
<line x1="702.5" x2="702.5" y1="558.5" y2="728.5" stroke="rgba(0,0,0,0.1)" stroke-width="1"/>
<line x1="796.5" x2="796.5" y1="558.5" y2="728.5" stroke="rgba(0,0,0,0.1)" stroke-width="1"/>
<line x1="890.5" x2="890.5" y1="558.5" y2="728.5" stroke="rgba(0,0,0,0.1)" stroke-width="1"/>
<line x1="983.5" x2="983.5" y1="558.5" y2="728.5" stroke="rgba(0,0,0,0.1)" stroke-width="1"/>
<line x1="1077.5" x2="1077.5" y1="558.5" y2="728.5" stroke="rgba(0,0,0,0.1)" stroke-width="1"/>
<line x1="1171.5" x2="1171.5" y1="558.5" y2="728.5" stroke="rgba(0,0,0,0.1)" stroke-width="1"/>
<line x1="1265.5" x2="1265.5" y1="558.5" y2="728.5" stroke="rgba(0,0,0,0.1)" stroke-width="1"/>
<path d="M233.30,673.73 C270.83,662.19 289.03,647.38 327.13,644.87 C364.10,642.44 384.79,666.13 420.95,661.36 C459.86,656.23 475.76,626.14 514.78,620.14 C550.82,614.60 572.01,636.53 608.61,632.50 C647.07,628.28 663.88,604.61 702.44,599.52 C738.95,594.71 758.95,609.41 796.26,607.77 C834.01,606.11 852.35,592.94 890.09,591.28 C927.41,589.64 946.76,601.97 983.92,599.52 C1021.82,597.03 1039.93,585.56 1077.75,578.91 C1115.00,572.37 1133.95,570.68 1171.57,566.54 C1209.01,562.43 1227.87,561.60 1265.40,558.30 L1265.4,723.2 L233.3,723.2 Z" fill="rgba(40,167,69,0.1)"/>
<path d="M233.30,681.98 C270.83,678.68 289.54,674.56 327.13,673.73 C364.60,672.91 384.25,682.69 420.95,677.85 C459.32,672.80 476.48,653.20 514.78,649.00 C551.54,644.96 571.29,658.88 608.61,657.24 C646.35,655.58 664.64,643.24 702.44,640.75 C739.70,638.29 758.88,646.52 796.26,644.87 C833.94,643.22 852.42,634.16 890.09,632.50 C927.48,630.86 946.53,638.27 983.92,636.63 C1021.59,634.97 1040.07,625.92 1077.75,624.26 C1115.13,622.62 1134.10,629.21 1171.57,628.38 C1209.16,627.56 1227.87,623.44 1265.40,620.14 L1265.4,723.2 L233.3,723.2 Z" fill="rgba(220,53,69,0.1)"/>
<path d="M233.30,673.73 C270.83,662.19 289.03,647.38 327.13,644.87 C364.10,642.44 384.79,666.13 420.95,661.36 C459.86,656.23 475.76,626.14 514.78,620.14 C550.82,614.60 572.01,636.53 608.61,632.50 C647.07,628.28 663.88,604.61 702.44,599.52 C738.95,594.71 758.95,609.41 796.26,607.77 C834.01,606.11 852.35,592.94 890.09,591.28 C927.41,589.64 946.76,601.97 983.92,599.52 C1021.82,597.03 1039.93,585.56 1077.75,578.91 C1115.00,572.37 1133.95,570.68 1171.57,566.54 C1209.01,562.43 1227.87,561.60 1265.40,558.30" fill="none" stroke="#28a745" stroke-width="2"/>
<path d="M233.30,681.98 C270.83,678.68 289.54,674.56 327.13,673.73 C364.60,672.91 384.25,682.69 420.95,677.85 C459.32,672.80 476.48,653.20 514.78,649.00 C551.54,644.96 571.29,658.88 608.61,657.24 C646.35,655.58 664.64,643.24 702.44,640.75 C739.70,638.29 758.88,646.52 796.26,644.87 C833.94,643.22 852.42,634.16 890.09,632.50 C927.48,630.86 946.53,638.27 983.92,636.63 C1021.59,634.97 1040.07,625.92 1077.75,624.26 C1115.13,622.62 1134.10,629.21 1171.57,628.38 C1209.16,627.56 1227.87,623.44 1265.40,620.14" fill="none" stroke="#dc3545" stroke-width="2"/>
<circle cx="233.30" cy="673.73" r="2.1" fill="rgba(40,167,69,0.1)" stroke="#28a745" stroke-width="1"/>
<circle cx="327.13" cy="644.87" r="2.1" fill="rgba(40,167,69,0.1)" stroke="#28a745" stroke-width="1"/>
<circle cx="420.95" cy="661.36" r="2.1" fill="rgba(40,167,69,0.1)" stroke="#28a745" stroke-width="1"/>
<circle cx="514.78" cy="620.14" r="2.1" fill="rgba(40,167,69,0.1)" stroke="#28a745" stroke-width="1"/>
<circle cx="608.61" cy="632.50" r="2.1" fill="rgba(40,167,69,0.1)" stroke="#28a745" stroke-width="1"/>
<circle cx="702.44" cy="599.52" r="2.1" fill="rgba(40,167,69,0.1)" stroke="#28a745" stroke-width="1"/>
<circle cx="796.26" cy="607.77" r="2.1" fill="rgba(40,167,69,0.1)" stroke="#28a745" stroke-width="1"/>
<circle cx="890.09" cy="591.28" r="2.1" fill="rgba(40,167,69,0.1)" stroke="#28a745" stroke-width="1"/>
<circle cx="983.92" cy="599.52" r="2.1" fill="rgba(40,167,69,0.1)" stroke="#28a745" stroke-width="1"/>
<circle cx="1077.75" cy="578.91" r="2.1" fill="rgba(40,167,69,0.1)" stroke="#28a745" stroke-width="1"/>
<circle cx="1171.57" cy="566.54" r="2.1" fill="rgba(40,167,69,0.1)" stroke="#28a745" stroke-width="1"/>
<circle cx="1265.40" cy="558.30" r="2.1" fill="rgba(40,167,69,0.1)" stroke="#28a745" stroke-width="1"/>
<circle cx="233.30" cy="681.98" r="2.1" fill="rgba(220,53,69,0.1)" stroke="#dc3545" stroke-width="1"/>
<circle cx="327.13" cy="673.73" r="2.1" fill="rgba(220,53,69,0.1)" stroke="#dc3545" stroke-width="1"/>
<circle cx="420.95" cy="677.85" r="2.1" fill="rgba(220,53,69,0.1)" stroke="#dc3545" stroke-width="1"/>
<circle cx="514.78" cy="649.00" r="2.1" fill="rgba(220,53,69,0.1)" stroke="#dc3545" stroke-width="1"/>
<circle cx="608.61" cy="657.24" r="2.1" fill="rgba(220,53,69,0.1)" stroke="#dc3545" stroke-width="1"/>
<circle cx="702.44" cy="640.75" r="2.1" fill="rgba(220,53,69,0.1)" stroke="#dc3545" stroke-width="1"/>
<circle cx="796.26" cy="644.87" r="2.1" fill="rgba(220,53,69,0.1)" stroke="#dc3545" stroke-width="1"/>
<circle cx="890.09" cy="632.50" r="2.1" fill="rgba(220,53,69,0.1)" stroke="#dc3545" stroke-width="1"/>
<circle cx="983.92" cy="636.63" r="2.1" fill="rgba(220,53,69,0.1)" stroke="#dc3545" stroke-width="1"/>
<circle cx="1077.75" cy="624.26" r="2.1" fill="rgba(220,53,69,0.1)" stroke="#dc3545" stroke-width="1"/>
<circle cx="1171.57" cy="628.38" r="2.1" fill="rgba(220,53,69,0.1)" stroke="#dc3545" stroke-width="1"/>
<circle cx="1265.40" cy="620.14" r="2.1" fill="rgba(220,53,69,0.1)" stroke="#dc3545" stroke-width="1"/></svg>
<div class="t" style="right:1623.00px;text-align:right;top:719.33px;font-size:8px;line-height:8px;color:#666;">₵0</div>
<div class="t" style="right:1623.00px;text-align:right;top:698.72px;font-size:8px;line-height:8px;color:#666;">₵5,000</div>
<div class="t" style="right:1623.00px;text-align:right;top:678.10px;font-size:8px;line-height:8px;color:#666;">₵10,000</div>
<div class="t" style="right:1623.00px;text-align:right;top:657.49px;font-size:8px;line-height:8px;color:#666;">₵15,000</div>
<div class="t" style="right:1623.00px;text-align:right;top:636.88px;font-size:8px;line-height:8px;color:#666;">₵20,000</div>
<div class="t" style="right:1623.00px;text-align:right;top:616.27px;font-size:8px;line-height:8px;color:#666;">₵25,000</div>
<div class="t" style="right:1623.00px;text-align:right;top:595.65px;font-size:8px;line-height:8px;color:#666;">₵30,000</div>
<div class="t" style="right:1623.00px;text-align:right;top:575.04px;font-size:8px;line-height:8px;color:#666;">₵35,000</div>
<div class="t" style="right:1623.00px;text-align:right;top:554.43px;font-size:8px;line-height:8px;color:#666;">₵40,000</div>
<div class="t" style="left:233.30px;top:730.63px;font-size:8px;line-height:8px;color:#666;width:0;display:flex;justify-content:center;">Jan</div>
<div class="t" style="left:327.13px;top:730.63px;font-size:8px;line-height:8px;color:#666;width:0;display:flex;justify-content:center;">Feb</div>
<div class="t" style="left:420.95px;top:730.63px;font-size:8px;line-height:8px;color:#666;width:0;display:flex;justify-content:center;">Mar</div>
<div class="t" style="left:514.78px;top:730.63px;font-size:8px;line-height:8px;color:#666;width:0;display:flex;justify-content:center;">Apr</div>
<div class="t" style="left:608.61px;top:730.63px;font-size:8px;line-height:8px;color:#666;width:0;display:flex;justify-content:center;">May</div>
<div class="t" style="left:702.44px;top:730.63px;font-size:8px;line-height:8px;color:#666;width:0;display:flex;justify-content:center;">Jun</div>
<div class="t" style="left:796.26px;top:730.63px;font-size:8px;line-height:8px;color:#666;width:0;display:flex;justify-content:center;">Jul</div>
<div class="t" style="left:890.09px;top:730.63px;font-size:8px;line-height:8px;color:#666;width:0;display:flex;justify-content:center;">Aug</div>
<div class="t" style="left:983.92px;top:730.63px;font-size:8px;line-height:8px;color:#666;width:0;display:flex;justify-content:center;">Sep</div>
<div class="t" style="left:1077.75px;top:730.63px;font-size:8px;line-height:8px;color:#666;width:0;display:flex;justify-content:center;">Oct</div>
<div class="t" style="left:1171.57px;top:730.63px;font-size:8px;line-height:8px;color:#666;width:0;display:flex;justify-content:center;">Nov</div>
<div class="t" style="left:1265.40px;top:730.63px;font-size:8px;line-height:8px;color:#666;width:0;display:flex;justify-content:center;">Dec</div>
<div style="position:absolute;left:668.30px;top:542.90px;width:28.70px;height:9.90px;border:2px solid #28a745;background:rgba(40,167,69,0.1);box-sizing:border-box;"></div>
<div class="t" style="left:700.00px;top:543.83px;font-size:8px;line-height:8px;color:#666;">Income</div>
<div style="position:absolute;left:732.40px;top:542.90px;width:28.70px;height:9.90px;border:2px solid #dc3545;background:rgba(220,53,69,0.1);box-sizing:border-box;"></div>
<div class="t" style="left:764.00px;top:543.83px;font-size:8px;line-height:8px;color:#666;">Expenses</div>
<div style="position:absolute;left:1300.50px;top:491.00px;width:542.50px;height:260.50px;background:#fff;border-radius:6px;box-shadow:0 1.5px 3px rgba(30,40,70,0.07);"></div>
<div style="position:absolute;left:1300.50px;top:491.00px;width:542.50px;height:35.00px;background:#f8f9fb;border-radius:6px 6px 0 0;border-bottom:1px solid #e2e6ef;box-sizing:border-box;"></div>
<svg style="position:absolute;left:1311.80px;top:498.80px;" width="14.50" height="14.20" viewBox="0 0 14.5 14.2"><path d="M6.2 1.8 L6.2 8.2 L10.6 12.6 Q8.8 14.2 6.5 14.2 Q0 14.2 0 8 Q0 2.4 6.2 1.8Z" fill="#212529"/><path d="M7.6 0 Q14 0.3 14.3 6.6 L7.6 6.6Z" fill="#212529"/><path d="M8.6 8.1 L14.5 8.1 Q14.2 10.4 12.6 12.1Z" fill="#212529"/></svg>
<div class="t" style="left:1331.90px;top:499.20px;font-size:13.7px;line-height:13.7px;font-weight:bold;color:#212529;">Expense Distribution</div>
<svg style="position:absolute;left:1480.5px;top:538.2px;" width="182.4" height="182.4" viewBox="0 0 182.4 182.4"><circle cx="91.2" cy="91.2" r="68.45" fill="none" stroke="#000" stroke-width="45.5"/><line x1="91.2" y1="0" x2="91.2" y2="46" stroke="#fff" stroke-width="1"/></svg>
<div style="position:absolute;left:1510.70px;top:727.30px;width:26.30px;height:8.10px;background:#666;"></div>
<div class="t" style="left:1541.00px;top:727.23px;font-size:8px;line-height:8px;color:#666;">Repaire and Maintenance</div>
<div style="position:absolute;left:184.00px;top:771.00px;width:1101.00px;height:161.50px;background:#fff;border-radius:6px;box-shadow:0 1.5px 3px rgba(30,40,70,0.07);"></div>
<div style="position:absolute;left:184.00px;top:771.00px;width:1101.00px;height:40.50px;background:#f8f9fb;border-radius:6px 6px 0 0;border-bottom:1px solid #e2e6ef;box-sizing:border-box;"></div>
<svg style="position:absolute;left:194.20px;top:783.00px;" width="15.10" height="11.50" viewBox="0 0 15.1 11.5"><rect x="0" y="0" width="15.1" height="11.5" rx="1.8" fill="#212529"/><rect x="2.5" y="2.6" width="1.5" height="1.4" fill="#fff"/><rect x="5" y="2.6" width="7.8" height="1.4" fill="#fff"/><rect x="2.5" y="5.1" width="1.5" height="1.4" fill="#ccc"/><rect x="5" y="5.1" width="7.8" height="1.4" fill="#ccc"/><rect x="2.5" y="7.6" width="1.5" height="1.4" fill="#fff"/><rect x="5" y="7.6" width="7.8" height="1.4" fill="#fff"/></svg>
<div class="t" style="left:215.10px;top:782.45px;font-size:14px;line-height:14px;font-weight:bold;color:#212529;">Expense by Category</div>
<div style="position:absolute;left:1211.00px;top:779.00px;width:62.60px;height:20.70px;border:1px solid #0d6efd;border-radius:3px;box-sizing:border-box;"></div>
<svg style="position:absolute;left:1217.30px;top:784.80px;" width="10.00" height="9.50" viewBox="0 0 10 9.5"><path d="M5 0.3 L5 6 M2.5 3.6 L5 6.1 L7.5 3.6" fill="none" stroke="#0d6efd" stroke-width="1.3" stroke-linecap="round"/><path d="M1 6.4 L3.5 6.4 L5 7.6 L6.5 6.4 L9 6.4 Q9.8 6.4 9.8 7.2 L9.8 8.7 Q9.8 9.5 9 9.5 L1 9.5 Q0.2 9.5 0.2 8.7 L0.2 7.2 Q0.2 6.4 1 6.4Z" fill="#0d6efd"/></svg>
<div class="t" style="left:1229.40px;top:785.43px;font-size:10px;line-height:10px;color:#0d6efd;">Export</div>
<svg style="position:absolute;left:1264.00px;top:789.20px;" width="4.20" height="2.50" viewBox="0 0 4.2 2.5"><path d="M0 0 L4.2 0 L2.1 2.5Z" fill="#0d6efd"/></svg>
<div style="position:absolute;left:194.00px;top:823.20px;width:1079.60px;height:29.20px;background:#f8f9fb;border-bottom:1.5px solid #c9cdd2;box-sizing:border-box;"></div>
<div class="t" style="left:199.90px;top:831.99px;font-size:11px;line-height:11px;font-weight:bold;color:#6c757d;">Category</div>
<div class="t" style="right:1048.40px;text-align:right;top:831.99px;font-size:11px;line-height:11px;font-weight:bold;color:#6c757d;">Monthly Amount</div>
<div class="t" style="right:835.00px;text-align:right;top:831.99px;font-size:11px;line-height:11px;font-weight:bold;color:#6c757d;">Yearly Amount</div>
<div class="t" style="right:681.00px;text-align:right;top:831.99px;font-size:11px;line-height:11px;font-weight:bold;color:#6c757d;">% of Total</div>
<div class="t" style="left:1179.70px;top:831.99px;font-size:11px;line-height:11px;font-weight:bold;color:#6c757d;">Trend</div>
<div style="position:absolute;left:194.00px;top:880.50px;width:1079.60px;height:1.00px;background:#dee2e6;"></div>
<div class="t" style="left:213.50px;top:860.69px;font-size:11px;line-height:11px;color:#212529;">Repaire and Maintenance</div>
<div class="t" style="right:1048.40px;text-align:right;top:860.69px;font-size:11px;line-height:11px;font-weight:bold;color:#212529;">₵</div>
<div class="t" style="right:835.00px;text-align:right;top:860.69px;font-size:11px;line-height:11px;color:#212529;letter-spacing:0.4px;">₵2000.00</div>
<div class="t" style="right:681.00px;text-align:right;top:860.69px;font-size:11px;line-height:11px;color:#212529;">%</div>
<div style="position:absolute;left:1179.30px;top:860.80px;width:18.60px;height:12.80px;background:#198754;border-radius:3px;"></div>
<svg style="position:absolute;left:1184.60px;top:863.00px;" width="8.00" height="8.50" viewBox="0 0 8 8.5"><path d="M4 0.5 L4 7.3 M1.3 4.6 L4 7.4 L6.7 4.6" fill="none" stroke="#fff" stroke-width="1.3"/></svg>
<div style="position:absolute;left:194.00px;top:881.50px;width:1079.60px;height:30.00px;background:#f8f9fb;border-bottom:1.5px solid #c9cdd2;box-sizing:border-box;"></div>
<div class="t" style="left:199.90px;top:890.69px;font-size:11px;line-height:11px;font-weight:bold;color:#000;">Total</div>
<div class="t" style="right:1048.40px;text-align:right;top:890.69px;font-size:11px;line-height:11px;font-weight:bold;color:#000;letter-spacing:0.7px;">₵2000.00</div>
<div class="t" style="right:835.00px;text-align:right;top:890.69px;font-size:11px;line-height:11px;font-weight:bold;color:#000;letter-spacing:0.7px;">₵2000.00</div>
<div class="t" style="right:681.00px;text-align:right;top:890.69px;font-size:11px;line-height:11px;font-weight:bold;color:#000;letter-spacing:0.4px;">100%</div>
<div style="position:absolute;left:1301.00px;top:768.00px;width:542.00px;height:179.50px;background:#fff;border-radius:6px;box-shadow:0 1.5px 3px rgba(30,40,70,0.07);"></div>
<div style="position:absolute;left:1301.00px;top:768.00px;width:542.00px;height:38.00px;background:#0d6efd;border-radius:6px 6px 0 0;"></div>
<svg style="position:absolute;left:1311.20px;top:780.50px;" width="10.50" height="13.50" viewBox="0 0 10.5 13.5"><path d="M0 1.5 Q0 0 1.5 0 L6.5 0 L10.5 4 L10.5 12 Q10.5 13.5 9 13.5 L1.5 13.5 Q0 13.5 0 12Z" fill="#fff"/><path d="M2.5 10.5 Q4.5 6.5 5 3.5 Q6 8 8.5 10 Q5 9.2 2.5 10.5Z" fill="none" stroke="#0d6efd" stroke-width="0.9"/></svg>
<div class="t" style="left:1326.90px;top:779.75px;font-size:14px;line-height:14px;font-weight:bold;color:#fff;">Financial Reports</div>
<div style="position:absolute;left:1311.20px;top:817.40px;width:520.50px;height:25.50px;border:1px solid #0d6efd;border-radius:4px;box-sizing:border-box;"></div>
<svg style="position:absolute;left:1320.50px;top:824.45px;" width="14.00" height="11.50" viewBox="0 0 14 11.5"><rect x="6.3" y="0" width="1.4" height="11" fill="#0d6efd"/><rect x="2" y="2" width="10" height="1.3" fill="#0d6efd"/><rect x="3" y="10" width="8" height="1.4" fill="#0d6efd"/><path d="M0.3 7.5 L2.5 2.8 L4.7 7.5 Q2.5 9.5 0.3 7.5Z M9.3 7.5 L11.5 2.8 L13.7 7.5 Q11.5 9.5 9.3 7.5Z" fill="none" stroke="#0d6efd" stroke-width="1.1"/></svg>
<div class="t" style="left:1339.30px;top:824.50px;font-size:11.4px;line-height:11.4px;color:#0d6efd;">Balance Sheet</div>
<div style="position:absolute;left:1311.20px;top:849.20px;width:520.50px;height:25.50px;border:1px solid #198754;border-radius:4px;box-sizing:border-box;"></div>
<svg style="position:absolute;left:1320.00px;top:856.75px;" width="11.00" height="10.00" viewBox="0 0 11 10"><path d="M0.8 0 L0.8 9.2 L11 9.2" fill="none" stroke="#198754" stroke-width="1.5"/><path d="M3 6.5 L5.2 3.8 L7 5.5 L10 2.3" fill="none" stroke="#198754" stroke-width="1.5"/></svg>
<div class="t" style="left:1336.30px;top:856.30px;font-size:11.4px;line-height:11.4px;color:#198754;">Profit &amp; Loss Statement</div>
<div style="position:absolute;left:1311.20px;top:880.30px;width:520.50px;height:25.50px;border:1px solid #0dcaf0;border-radius:4px;box-sizing:border-box;"></div>
<svg style="position:absolute;left:1320.00px;top:887.85px;" width="11.00" height="10.50" viewBox="0 0 11 10.5"><path d="M0.5 2.8 L9.5 2.8 M7 0.3 L9.7 2.8 L7 5.3" fill="none" stroke="#0dcaf0" stroke-width="1.5"/><path d="M10.5 7.7 L1.5 7.7 M4 5.2 L1.3 7.7 L4 10.2" fill="none" stroke="#0dcaf0" stroke-width="1.5"/></svg>
<div class="t" style="left:1336.30px;top:887.40px;font-size:11.4px;line-height:11.4px;color:#0dcaf0;">Cash Flow Statement</div>
<div style="position:absolute;left:1311.20px;top:911.10px;width:520.50px;height:25.50px;border:1px solid #ffc107;border-radius:4px;box-sizing:border-box;"></div>
<svg style="position:absolute;left:1320.00px;top:918.35px;" width="11.00" height="11.00" viewBox="0 0 11 11"><path d="M5.5 0 L5.5 6.5 M2.8 4 L5.5 6.8 L8.2 4" fill="none" stroke="#ffc107" stroke-width="1.6"/><rect x="0" y="7.5" width="11" height="3.5" rx="0.8" fill="#ffc107"/></svg>
<div class="t" style="left:1336.30px;top:918.20px;font-size:11.4px;line-height:11.4px;color:#ffc107;">Advanced Export</div>
</body></html>
